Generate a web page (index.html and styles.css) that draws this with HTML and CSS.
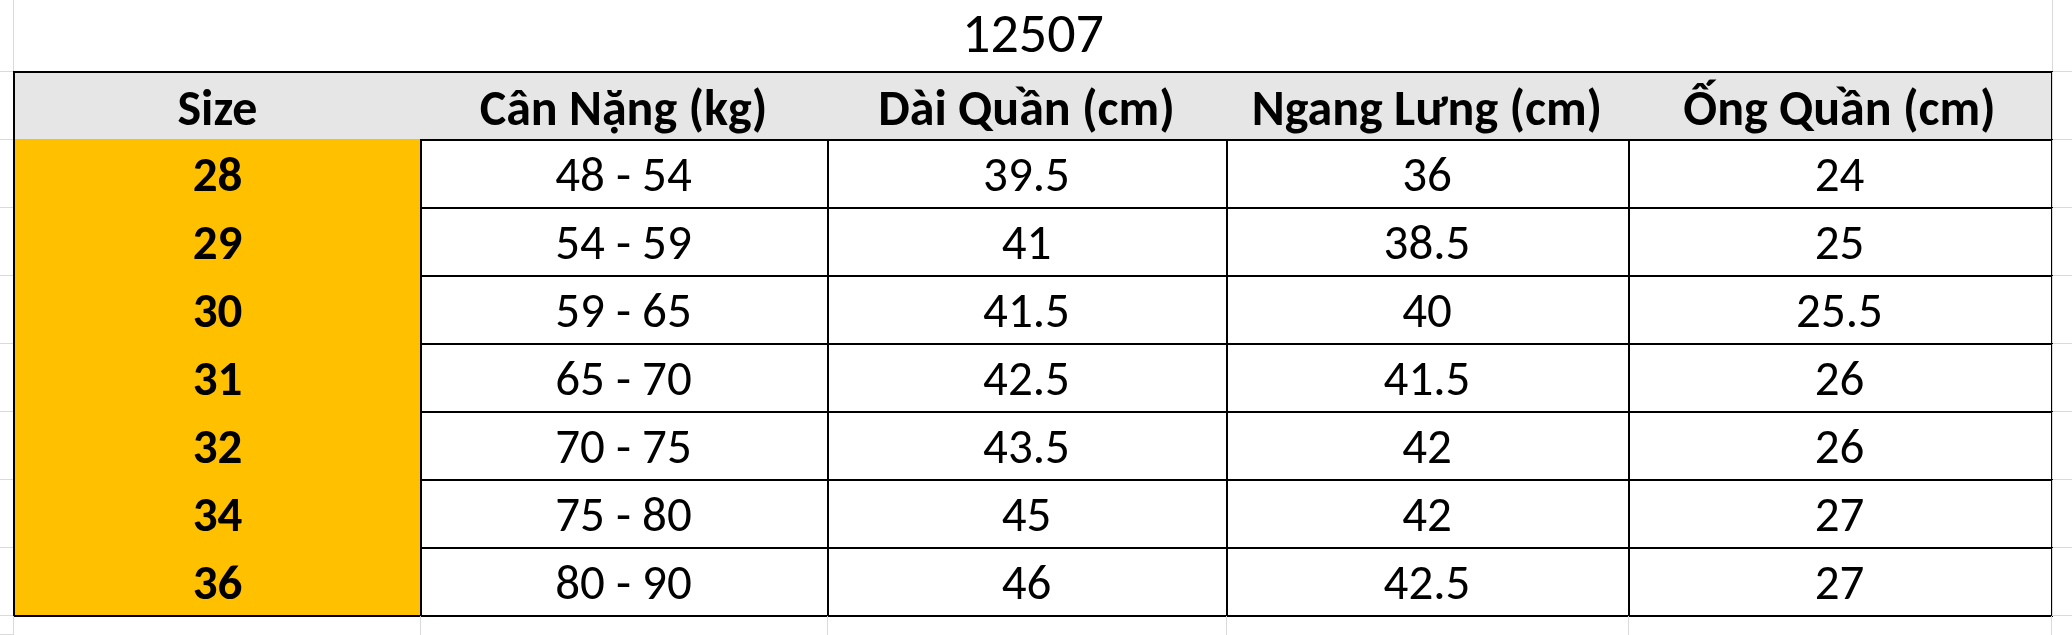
FILE: index.html
```html
<!DOCTYPE html>
<html lang="vi">
<head>
<meta charset="utf-8">
<title>12507</title>
<link rel="stylesheet" href="styles.css">
</head>
<body>
<div class="sheet">
  <div class="m ml mt"></div>
  <div class="title">12507</div>
  <div class="m mr mt"></div>

  <div class="m ml"></div>
  <div class="c h first top">Size</div>
  <div class="c h top">Cân Nặng (kg)</div>
  <div class="c h top">Dài Quần (cm)</div>
  <div class="c h top">Ngang Lưng (cm)</div>
  <div class="c h top">Ống Quần (cm)</div>
  <div class="m mr"></div>

  <div class="m ml"></div>
  <div class="c s first">28</div><div class="c">48 - 54</div><div class="c">39.5</div><div class="c">36</div><div class="c">24</div>
  <div class="m mr"></div>

  <div class="m ml"></div>
  <div class="c s first">29</div><div class="c">54 - 59</div><div class="c">41</div><div class="c">38.5</div><div class="c">25</div>
  <div class="m mr"></div>

  <div class="m ml"></div>
  <div class="c s first">30</div><div class="c">59 - 65</div><div class="c">41.5</div><div class="c">40</div><div class="c">25.5</div>
  <div class="m mr"></div>

  <div class="m ml"></div>
  <div class="c s first">31</div><div class="c">65 - 70</div><div class="c">42.5</div><div class="c">41.5</div><div class="c">26</div>
  <div class="m mr"></div>

  <div class="m ml"></div>
  <div class="c s first">32</div><div class="c">70 - 75</div><div class="c">43.5</div><div class="c">42</div><div class="c">26</div>
  <div class="m mr"></div>

  <div class="m ml"></div>
  <div class="c s first">34</div><div class="c">75 - 80</div><div class="c">45</div><div class="c">42</div><div class="c">27</div>
  <div class="m mr"></div>

  <div class="m ml"></div>
  <div class="c s first">36</div><div class="c">80 - 90</div><div class="c">46</div><div class="c">42.5</div><div class="c">27</div>
  <div class="m mr"></div>

  <div class="m ml b"></div>
  <div class="m b"></div><div class="m b"></div><div class="m b"></div><div class="m b"></div><div class="m b"></div>
  <div class="m b last"></div>
</div>
</body>
</html>
```
FILE: styles.css
```css
html, body {
  margin: 0;
  padding: 0;
  background: #ffffff;
}

.sheet {
  width: 2072px;
  height: 635px;
  overflow: hidden;
  display: grid;
  grid-template-columns: 14px 407px 407px 399px 402px 423px 20px;
  grid-template-rows: 72px repeat(8, 68px) 19px;
  font-family: Carlito, Lato, "Open Sans", sans-serif;
  color: #000000;
}

.m {
  box-sizing: border-box;
}

.ml {
  border-right: 1px solid #dadada;
  border-bottom: 1px solid #dadada;
}

.mr {
  border-left: 1px solid #dadada;
  border-bottom: 1px solid #dadada;
}

.b {
  border-right: 1px solid #dadada;
}

.b.last {
  border-right: none;
}

.title {
  grid-column: 2 / 7;
  font-size: 56px;
  line-height: 1.2;
  text-align: center;
  padding-top: 0;
  box-sizing: border-box;
}

.c {
  box-sizing: border-box;
  display: flex;
  align-items: center;
  justify-content: center;
  font-size: 49px;
  padding-top: 2px;
  border-right: 2px solid #000000;
  border-bottom: 2px solid #000000;
  margin: -1px;
  white-space: nowrap;
}

.c.first {
  border-left: 2px solid #000000;
}

.c.top {
  border-top: 2px solid #000000;
}

.h {
  background: #e6e6e6;
  font-weight: 700;
  font-size: 50px;
  padding-top: 3px;
}

.s {
  background: #ffc000;
  font-weight: 700;
}
```
